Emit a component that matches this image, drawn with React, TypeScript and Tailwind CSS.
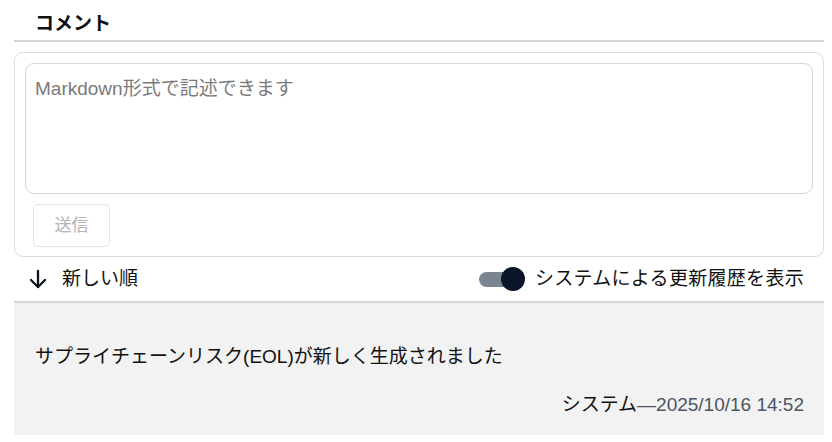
import React, { useState } from 'react';

const font = { fontFamily: '"Liberation Sans", "Noto Sans CJK JP", sans-serif' };

const ArrowDown = () => (
  <svg width="20" height="20" viewBox="0 0 20 20" fill="none" stroke="#0b1220" strokeWidth="2.3" strokeLinecap="round" strokeLinejoin="round">
    <path d="M10 2v16" />
    <path d="M3 11l7 7 7-7" />
  </svg>
);

const Toggle = ({ on, onChange }: { on: boolean; onChange: () => void }) => (
  <button onClick={onChange} className="relative w-[46px] h-[24px] flex items-center">
    <span className={`w-[36px] h-[15px] rounded-full ${on ? 'bg-[#7b8591]' : 'bg-[#c4c8cc]'}`} />
    <span className={`absolute top-[0px] w-[24px] h-[24px] rounded-full bg-[#0a1628] ${on ? 'left-[22px]' : 'left-0'}`} />
  </button>
);

export default function App() {
  const [showSystem, setShowSystem] = useState(true);
  const [text, setText] = useState('');

  return (
    <div className="w-[832px] h-[442px] bg-white pl-[14px] pr-[8px] text-[#111]" style={font}>
      <div className="h-[42px] flex items-center pt-[9px] pl-[21px] border-b-2 border-[#d6d6d6]">
        <h2 className="text-[19px] font-bold">コメント</h2>
      </div>

      <div className="mt-[10px] border border-[#dcdcdc] rounded-[9px] p-[10px] pb-[9px]">
        <textarea
          value={text}
          onChange={(e) => setText(e.target.value)}
          placeholder="Markdown形式で記述できます"
          className="block w-full h-[131px] resize-none border border-[#d6d6d6] rounded-[9px] px-[9px] py-[11px] text-[19px] leading-[28px] placeholder:text-[#7a7a7a] outline-none"
        />
        <button
          disabled={!text}
          className="mt-[10px] ml-[8px] w-[77px] h-[43px] border border-[#e3e3e3] rounded-[5px] text-[17px] text-[#b3b3b3]"
        >
          送信
        </button>
      </div>

      <div className="h-[46px] flex items-center justify-between pl-[14px] pr-[20px] border-b-2 border-[#d6d6d6]">
        <button className="flex items-center gap-[14px] text-[19px]">
          <ArrowDown />
          <span>新しい順</span>
        </button>
        <div className="flex items-center gap-[10px] text-[19px]">
          <Toggle on={showSystem} onChange={() => setShowSystem(!showSystem)} />
          <span className="tracking-[0.3px]">システムによる更新履歴を表示</span>
        </div>
      </div>

      {showSystem && (
        <div className="bg-[#f2f2f2] h-[132px] pl-[21px] pr-[20px] pt-[40px]">
          <p className="text-[19px] leading-[28px]">サプライチェーンリスク(EOL)が新しく生成されました</p>
          <p className="mt-[20px] text-right text-[19px] leading-[28px]">
            システム<span className="text-[#4b5563]">—2025/10/16 14:52</span>
          </p>
        </div>
      )}
    </div>
  );
}
